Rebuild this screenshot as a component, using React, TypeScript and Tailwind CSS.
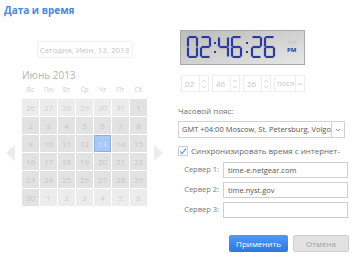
import React from "react";

const SEGS: Record<string, string> = {
  "0": "abcdef",
  "1": "bc",
  "2": "abged",
  "3": "abgcd",
  "4": "fgbc",
  "5": "afgcd",
  "6": "afgedc",
  "7": "abc",
  "8": "abcdefg",
  "9": "abcdfg",
};

// one 7-segment digit, 11x22
const Digit: React.FC<{ d: string; x: number }> = ({ d, x }) => {
  const on = SEGS[d];
  const lines: Record<string, [number, number, number, number]> = {
    a: [x + 1.5, 1, x + 9.5, 1],
    g: [x + 1.5, 11, x + 9.5, 11],
    d: [x + 1.5, 21, x + 9.5, 21],
    f: [x + 1, 1.5, x + 1, 10.5],
    b: [x + 10, 1.5, x + 10, 10.5],
    e: [x + 1, 11.5, x + 1, 20.5],
    c: [x + 10, 11.5, x + 10, 20.5],
  };
  return (
    <g>
      {on.split("").map((s) => {
        const [x1, y1, x2, y2] = lines[s];
        return <line key={s} x1={x1} y1={y1} x2={x2} y2={y2} stroke="#2c3a9c" strokeWidth={2.2} />;
      })}
    </g>
  );
};

const Lcd: React.FC = () => (
  <div className="w-[125px] h-[35px] border border-[#a9a9a9] bg-gradient-to-br from-[#bcbcbc] to-[#e6e6e6] relative">
    <svg width="100" height="22" className="absolute left-[5px] top-[5px]">
      <Digit d="0" x={1} />
      <Digit d="2" x={14} />
      <rect x={28} y={6} width={2} height={2} fill="#2c3a9c" />
      <rect x={28} y={15} width={2} height={2} fill="#2c3a9c" />
      <Digit d="4" x={32} />
      <Digit d="6" x={45} />
      <rect x={60} y={6} width={2} height={2} fill="#2c3a9c" />
      <rect x={60} y={15} width={2} height={2} fill="#2c3a9c" />
      <Digit d="2" x={65} />
      <Digit d="6" x={78} />
    </svg>
    <span className="absolute left-[106px] top-[8px] text-[6px] leading-none font-bold text-[#c9c9c9]">AM</span>
    <span className="absolute left-[106px] top-[16px] text-[6px] leading-none font-bold text-[#2c3a9c]">PM</span>
  </div>
);

const Spin: React.FC<{ v: string }> = ({ v }) => (
  <div className="w-[28px] h-[17px] border border-[#ededed] flex">
    <span className="flex-1 pl-[3px] text-[8px] leading-[15px] text-[#c6c6c6]">{v}</span>
    <div className="w-[9px] border-l border-[#ededed] flex flex-col">
      <svg width="8" height="7" viewBox="0 0 8 7" className="mt-px">
        <path d="M2 5 L4 3 L6 5" fill="none" stroke="#d4d4d4" strokeWidth={0.8} />
      </svg>
      <svg width="8" height="7" viewBox="0 0 8 7">
        <path d="M2 2 L4 4 L6 2" fill="none" stroke="#d4d4d4" strokeWidth={0.8} />
      </svg>
    </div>
  </div>
);

type Cell = { n: number; other?: boolean; sel?: boolean };

const weeks: Cell[][] = [
  [{ n: 26, other: true }, { n: 27, other: true }, { n: 28, other: true }, { n: 29, other: true }, { n: 30, other: true }, { n: 31, other: true }, { n: 1 }],
  [2, 3, 4, 5, 6, 7, 8].map((n) => ({ n })),
  [9, 10, 11, 12, 13, 14, 15].map((n) => ({ n, sel: n === 13 })),
  [16, 17, 18, 19, 20, 21, 22].map((n) => ({ n })),
  [23, 24, 25, 26, 27, 28, 29].map((n) => ({ n })),
  [{ n: 30 }, { n: 1, other: true }, { n: 2, other: true }, { n: 3, other: true }, { n: 4, other: true }, { n: 5, other: true }, { n: 6, other: true }],
];

const days = ["Вс", "Пн", "Вт", "Ср", "Чт", "Пт", "Сб"];

const Calendar: React.FC = () => (
  <div className="flex flex-col">
    <div className="ml-[22px] w-[125px] flex justify-center mt-[24px]">
      <div className="w-[96px] h-[17px] border border-[#efefef] rounded-[2px] text-[8px] leading-[15px] text-center text-[#c4c4c4]">
        Сегодня, Июн. 13, 2013
      </div>
    </div>
    <div className="ml-[22px] mt-[11px] text-[10px] leading-[13px] text-[#b3b3b3]">Июнь 2013</div>
    <div className="ml-[22px] mt-[4px] grid grid-cols-[repeat(7,17px)] gap-x-px text-[6.5px] leading-[8px] text-center text-[#cdcdcd]">
      {days.map((d) => (
        <span key={d}>{d}</span>
      ))}
    </div>
    <div className="flex items-center mt-[5px]">
      <div className="w-[22px] flex justify-center">
        <svg width="10" height="16" viewBox="0 0 10 16">
          <path d="M9 0 L0 8 L9 16 Z" fill="#ececec" />
        </svg>
      </div>
      <div className="grid grid-cols-[repeat(7,17px)] auto-rows-[17px] gap-px">
        {weeks.flat().map((c, i) => (
          <div
            key={i}
            className={
              c.sel
                ? "bg-[#a8c8f6] border border-[#86b1ec] text-[#d7e5fa] text-[8px] leading-[15px] text-center"
                : c.other
                ? "bg-[#ececec] text-[#d0d0d0] text-[8px] leading-[17px] text-center"
                : "bg-[#e2e2e2] text-[#c6c6c6] text-[8px] leading-[17px] text-center"
            }
          >
            {c.n}
          </div>
        ))}
      </div>
      <div className="w-[22px] flex justify-center">
        <svg width="10" height="16" viewBox="0 0 10 16">
          <path d="M1 0 L10 8 L1 16 Z" fill="#ececec" />
        </svg>
      </div>
    </div>
  </div>
);

const ServerRow: React.FC<{ label: string; value: string }> = ({ label, value }) => (
  <div className="flex items-center">
    <span className="w-[43px] text-right pr-[2px] text-[7.5px] text-[#7a7a7a]">{label}</span>
    <div className="ml-[2px] w-[125px] h-[16px] border border-[#cfcfcf] pl-[4px] text-[7.5px] leading-[14px] text-[#555]">
      {value}
    </div>
  </div>
);

const App: React.FC = () => {
  return (
    <div className="w-[356px] h-[261px] bg-white overflow-hidden font-['Open_Sans',sans-serif]">
      <div className="pl-[4px] pt-[3px] text-[10px] leading-[14px] font-bold text-[#4a88dc]">Дата и время</div>

      <div className="flex">
        <div className="w-[178px]">
          <Calendar />
        </div>

        {/* right side: clock, timezone, servers */}
        <div className="flex flex-col">
          <div className="ml-[2px] mt-[13px]">
            <Lcd />
          </div>
          <div className="ml-[3px] mt-[10px] flex gap-[3px]">
            <Spin v="02" />
            <Spin v="46" />
            <Spin v="26" />
            <div className="w-[31px] h-[17px] border border-[#ededed] flex">
              <span className="flex-1 pl-[2px] text-[7.5px] leading-[15px] text-[#c6c6c6] whitespace-nowrap">посл</span>
              <div className="w-[9px] border-l border-[#ededed] flex items-center justify-center">
                <svg width="6" height="4" viewBox="0 0 6 4">
                  <path d="M1 1 L3 3 L5 1" fill="none" stroke="#d4d4d4" strokeWidth={0.8} />
                </svg>
              </div>
            </div>
          </div>

          <div className="mt-[14px] text-[8px] leading-[10px] text-[#707070]">Часовой пояс:</div>
          <div className="mt-[5px] w-[167px] h-[17px] border border-[#d2d2d2] flex">
            <span className="flex-1 pl-[3px] text-[7.5px] leading-[15px] text-[#555] whitespace-nowrap overflow-hidden">
              GMT +04:00 Moscow, St. Petersburg, Volgograd
            </span>
            <div className="w-[13px] border-l border-[#d2d2d2] flex items-center justify-center">
              <svg width="6" height="4" viewBox="0 0 6 4">
                <path d="M1 1 L3 3 L5 1" fill="none" stroke="#8a8a8a" strokeWidth={0.9} />
              </svg>
            </div>
          </div>

          <div className="mt-[8px] flex items-center">
            <div className="w-[10px] h-[10px] border border-[#cfcfcf] flex items-center justify-center">
              <svg width="9" height="9" viewBox="0 0 9 9">
                <path d="M1.5 4.5 L3.5 7 L8 1" fill="none" stroke="#4a88dc" strokeWidth={1.2} />
              </svg>
            </div>
            <span className="ml-[3px] text-[8px] leading-[10px] text-[#6a6a6a]">Синхронизировать время с интернет-</span>
          </div>

          <div className="mt-[6px] flex flex-col gap-[4px]">
            <ServerRow label="Сервер 1:" value="time-e.netgear.com" />
            <ServerRow label="Сервер 2:" value="time.nyst.gov" />
            <ServerRow label="Сервер 3:" value="" />
          </div>

          <div className="mt-[17px] ml-[51px] flex gap-[5px]">
            <button className="w-[59px] h-[17px] rounded-[2px] bg-gradient-to-b from-[#4d9bf5] to-[#2c77e3] text-white text-[8px] leading-[17px]">
              Применить
            </button>
            <button className="w-[56px] h-[17px] rounded-[2px] border border-[#cfcfcf] bg-[#e2e2e2] text-[#a0a0a0] text-[8px] leading-[15px]">
              Отмена
            </button>
          </div>
        </div>
      </div>
    </div>
  );
};

export default App;
